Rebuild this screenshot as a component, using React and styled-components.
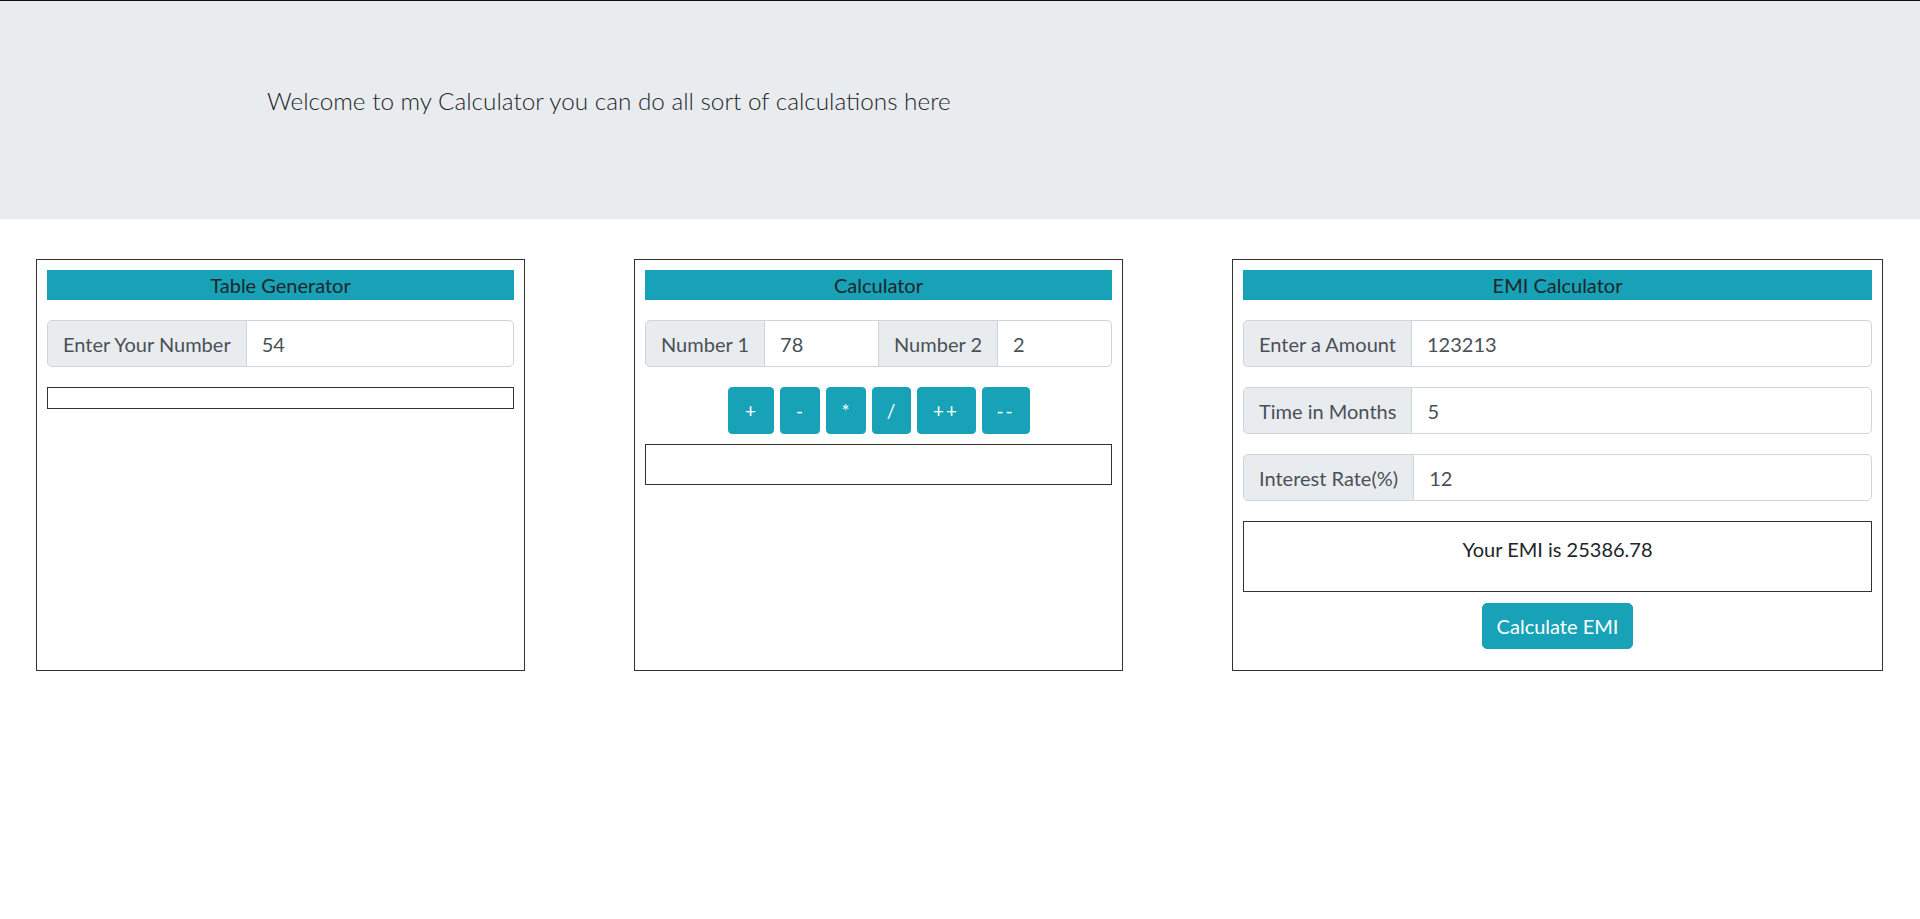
import React from "react";
import styled, { createGlobalStyle } from "styled-components";

const GlobalStyle = createGlobalStyle`
  html, body { margin: 0; padding: 0; background: #fff; }
  body {
    font-family: "Lato", "Open Sans", "Liberation Sans", sans-serif;
    color: #212529;
  }
  * { box-sizing: border-box; }
`;

const Page = styled.div`
  border-top: 1px solid #111;
`;

const Jumbotron = styled.header`
  background: #e9ecef;
  height: 218px;
  padding: 82px 0 0 267px;
`;

const Lead = styled.p`
  margin: 0;
  font-size: 24.3px;
  line-height: 36px;
  font-weight: 300;
  color: #212529;
`;

const CardsRow = styled.main`
  display: flex;
  justify-content: space-between;
  align-items: stretch;
  padding: 40px 37px 0 36px;
`;

const Card = styled.section`
  width: ${(p) => p.$w}px;
  border: 1px solid #333;
  padding: 10px;
  display: flex;
  flex-direction: column;
`;

const CardHeader = styled.div`
  background: #17a2b8;
  color: #212529;
  text-align: center;
  font-size: 20px;
  line-height: 30px;
`;

const InputGroup = styled.div`
  display: flex;
  height: 47px;
  margin-top: 20px;
`;

const Addon = styled.span`
  display: flex;
  align-items: center;
  padding: 0 15px;
  background: #e9ecef;
  border: 1px solid #ced4da;
  color: #495057;
  font-size: 20px;
  white-space: nowrap;
  margin-left: -1px;
  &:first-child {
    margin-left: 0;
    border-radius: 5px 0 0 5px;
  }
`;

const Input = styled.input`
  flex: 1;
  min-width: 0;
  margin-left: -1px;
  border: 1px solid #ced4da;
  padding: 0 15px;
  font-family: inherit;
  font-size: 20px;
  color: #495057;
  background: #fff;
  outline: none;
  &:last-child {
    border-radius: 0 5px 5px 0;
  }
`;

const ResultBox = styled.div`
  border: 1px solid #333;
  height: ${(p) => p.$h}px;
  margin-top: ${(p) => p.$mt}px;
  text-align: center;
  padding-top: ${(p) => p.$pt || 0}px;
  font-size: 20px;
  line-height: 24px;
  color: #212529;
`;

const ButtonRow = styled.div`
  display: flex;
  justify-content: center;
  gap: 6px;
  margin-top: 20px;
`;

const OpButton = styled.button`
  height: 47px;
  min-width: ${(p) => p.$mw}px;
  padding: 0 12px;
  border: 1px solid #17a2b8;
  border-radius: 4px;
  background: #17a2b8;
  color: #fff;
  font-family: inherit;
  font-size: 19px;
  letter-spacing: ${(p) => (p.$wide ? "2px" : "0")};
  cursor: pointer;
`;

const CalcButton = styled.button`
  align-self: center;
  height: 46px;
  width: 151px;
  margin: 11px 0;
  border: 1px solid #17a2b8;
  border-radius: 5px;
  background: #17a2b8;
  color: #fff;
  font-family: inherit;
  font-size: 20px;
  cursor: pointer;
`;

const ops = [
  { label: "+", mw: 46 },
  { label: "-", mw: 40 },
  { label: "*", mw: 40 },
  { label: "/", mw: 39 },
  { label: "++", mw: 59, wide: true },
  { label: "--", mw: 48, wide: true },
];

export default function App() {
  return (
    <Page>
      <GlobalStyle />
      <Jumbotron>
        <Lead>Welcome to my Calculator you can do all sort of calculations here</Lead>
      </Jumbotron>
      <CardsRow>
        <Card $w={489}>
          <CardHeader>Table Generator</CardHeader>
          <InputGroup>
            <Addon>Enter Your Number</Addon>
            <Input defaultValue="54" />
          </InputGroup>
          <ResultBox $h={22} $mt={20} />
        </Card>
        <Card $w={489}>
          <CardHeader>Calculator</CardHeader>
          <InputGroup>
            <Addon>Number 1</Addon>
            <Input defaultValue="78" />
            <Addon>Number 2</Addon>
            <Input defaultValue="2" />
          </InputGroup>
          <ButtonRow>
            {ops.map((o) => (
              <OpButton key={o.label} $mw={o.mw} $wide={o.wide}>
                {o.label}
              </OpButton>
            ))}
          </ButtonRow>
          <ResultBox $h={41} $mt={10} />
        </Card>
        <Card $w={651}>
          <CardHeader>EMI Calculator</CardHeader>
          <InputGroup>
            <Addon>Enter a Amount</Addon>
            <Input defaultValue="123213" />
          </InputGroup>
          <InputGroup>
            <Addon>Time in Months</Addon>
            <Input defaultValue="5" />
          </InputGroup>
          <InputGroup>
            <Addon>Interest Rate(%)</Addon>
            <Input defaultValue="12" />
          </InputGroup>
          <ResultBox $h={71} $mt={20} $pt={15}>
            Your EMI is 25386.78
          </ResultBox>
          <CalcButton>Calculate EMI</CalcButton>
        </Card>
      </CardsRow>
    </Page>
  );
}
